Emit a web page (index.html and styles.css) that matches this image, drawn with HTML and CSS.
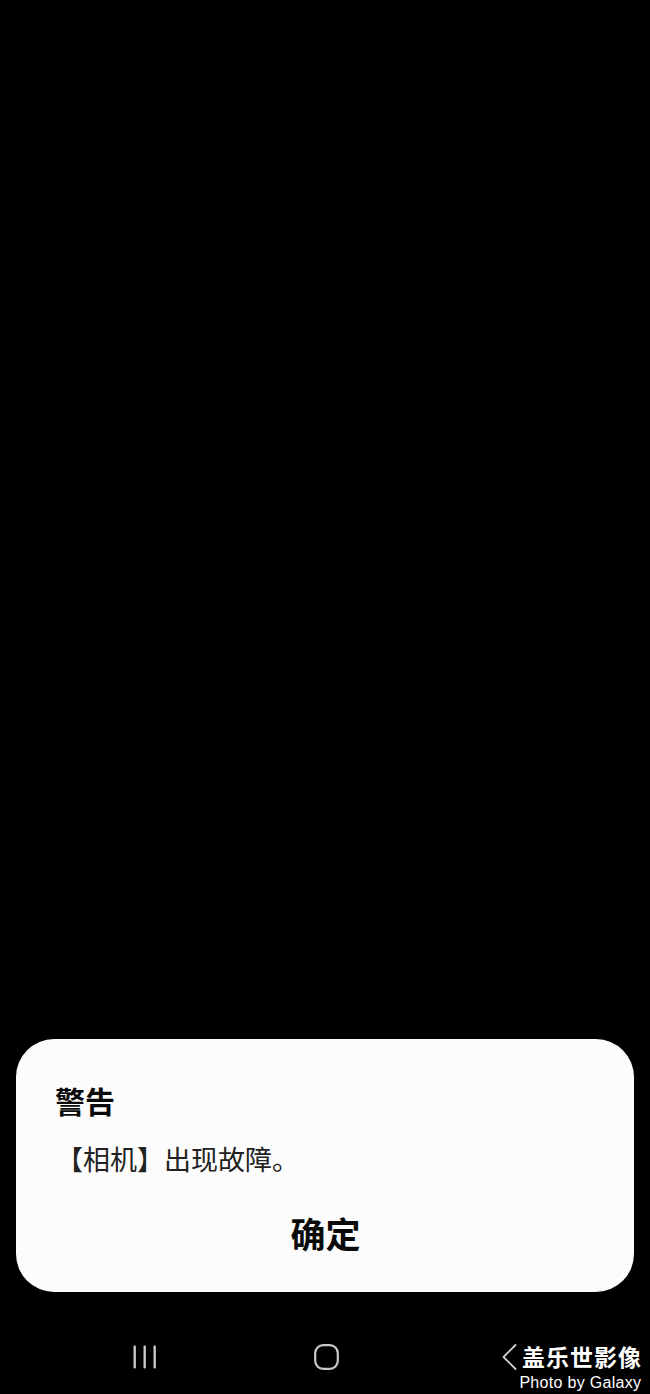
FILE: index.html
```html
<!DOCTYPE html>
<html lang="zh-CN">
<head>
<meta charset="utf-8">
<title>警告</title>
<link rel="stylesheet" href="styles.css">
</head>
<body>
<div class="screen">
  <div class="spacer"></div>
  <div class="dialog">
    <div class="title">警告</div>
    <div class="message">【相机】出现故障。</div>
    <div class="actions"><span class="btn">确定</span></div>
  </div>
  <div class="navbar">
    <svg class="nav-recents" width="24" height="24" viewBox="0 0 24 24">
      <rect x="0.5" y="0.5" width="2.4" height="23" rx="1" fill="#c8c8c8"/>
      <rect x="10.5" y="0.5" width="2.4" height="23" rx="1" fill="#c8c8c8"/>
      <rect x="20.5" y="0.5" width="2.4" height="23" rx="1" fill="#c8c8c8"/>
    </svg>
    <svg class="nav-home" width="25" height="26" viewBox="0 0 25 26">
      <rect x="1.2" y="1.2" width="22.6" height="23.6" rx="8" fill="none" stroke="#c8c8c8" stroke-width="2.2"/>
    </svg>
    <svg class="nav-back" width="15" height="26" viewBox="0 0 15 26">
      <polyline points="13.5,1 1.5,13 13.5,25" fill="none" stroke="#cfcfcf" stroke-width="1.8" stroke-linecap="round" stroke-linejoin="round"/>
    </svg>
    <div class="watermark">
      <div class="wm-cn">盖乐世影像</div>
      <div class="wm-en">Photo by Galaxy</div>
    </div>
  </div>
</div>
</body>
</html>
```

FILE: styles.css
```css
html, body {
  margin: 0;
  padding: 0;
  background: #000;
}

.screen {
  width: 650px;
  height: 1394px;
  display: flex;
  flex-direction: column;
  background: #000;
  font-family: "Noto Sans CJK SC", "Noto Sans", sans-serif;
  position: relative;
  overflow: hidden;
}

.spacer {
  flex: 1;
}

.dialog {
  margin: 0 16px;
  height: 253px;
  box-sizing: border-box;
  background: #fcfcfc;
  border-radius: 38px;
  padding: 43px 40px 0 40px;
  display: flex;
  flex-direction: column;
}

.title {
  font-size: 30px;
  line-height: 36px;
  font-weight: 700;
  color: #0a0a0a;
  margin-left: -1px;
}

.message {
  margin-top: 23px;
  font-size: 27px;
  line-height: 36px;
  font-weight: 400;
  color: #222;
}

.actions {
  margin-top: 34px;
  display: flex;
  justify-content: center;
}

.btn {
  font-size: 35px;
  line-height: 44px;
  font-weight: 700;
  color: #0a0a0a;
  margin-left: 1px;
}

.navbar {
  height: 102px;
  box-sizing: border-box;
  display: flex;
  align-items: flex-start;
  padding-top: 53px;
  padding-left: 133px;
  position: relative;
}

.nav-recents {
  display: block;
}

.nav-home {
  display: block;
  margin-left: 157px;
  margin-top: -1px;
}

.nav-back {
  display: block;
  margin-left: 163px;
  margin-top: -1px;
}

.watermark {
  position: absolute;
  right: 9px;
  top: 53px;
  text-align: right;
  color: #fff;
}

.wm-cn {
  font-family: "Noto Sans CJK SC", sans-serif;
  font-weight: 700;
  font-size: 23px;
  line-height: 22px;
  letter-spacing: 1px;
  margin-right: -1px;
}

.wm-en {
  margin-top: 8px;
  font-family: "Liberation Sans", Arial, sans-serif;
  font-size: 16px;
  line-height: 15px;
  letter-spacing: 0.3px;
  margin-right: -0.3px;
}
```
